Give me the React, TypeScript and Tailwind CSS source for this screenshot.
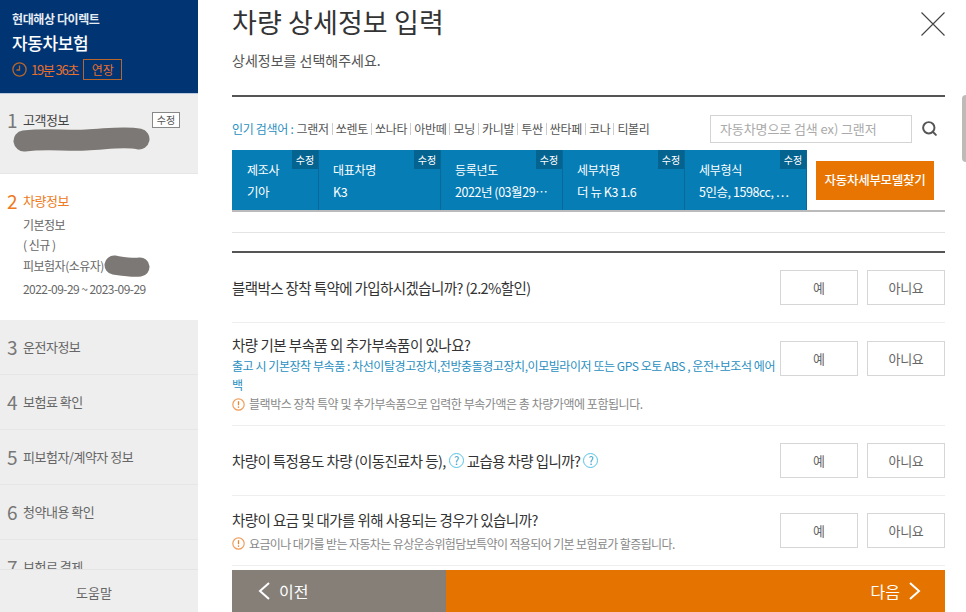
import { Search } from "lucide-react";

const FONT = "font-['Noto_Sans_CJK_KR','Noto_Sans',sans-serif]";

const popular = ["그랜저", "쏘렌토", "쏘나타", "아반떼", "모닝", "카니발", "투싼", "싼타페", "코나", "티볼리"];

const cells = [
    { label: "제조사", value: "기아", width: "w-[87px]", pad: "pl-[15px]" },
    { label: "대표차명", value: "K3", width: "w-[122px]", pad: "pl-[14px]" },
    { label: "등록년도", value: "2022년 (03월29…", width: "w-[122px]", pad: "pl-[14px]" },
    { label: "세부차명", value: "더 뉴 K3 1.6", width: "w-[122px]", pad: "pl-[14px]" },
    { label: "세부형식", value: "5인승, 1598cc, …", width: "w-[122px]", pad: "pl-[14px]" },
];

const steps = [
    { no: 3, name: "운전자정보" },
    { no: 4, name: "보험료 확인" },
    { no: 5, name: "피보험자/계약자 정보" },
    { no: 6, name: "청약내용 확인" },
    { no: 7, name: "보험료 결제" },
];

const Clock = () => (
    <svg width="15" height="15" viewBox="0 0 15 15" fill="none" stroke="#b8662c" strokeWidth="1.3" className="shrink-0">
        <circle cx="7.5" cy="7.5" r="6.6" />
        <path d="M7.5 3.6v4.4h-3" />
    </svg>
);

const Warn = () => (
    <svg width="13" height="13" viewBox="0 0 13 13" fill="none" className="shrink-0">
        <circle cx="6.5" cy="6.5" r="5.7" stroke="#f0a060" strokeWidth="1.2" />
        <path d="M6.5 3.2v4" stroke="#e8842c" strokeWidth="1.3" />
        <path d="M6.5 8.4v1.4" stroke="#e8842c" strokeWidth="1.3" />
    </svg>
);

const Help = () => (
    <span className="inline-flex h-[15px] w-[15px] shrink-0 items-center justify-center rounded-full border-[1.5px] border-[#55c4e8] text-[11px] leading-none text-[#2a9cc8]">
        ?
    </span>
);

const Choice = () => (
    <div className="flex shrink-0 gap-[9px]">
        <button className="h-[35px] w-[78px] border border-[#d6d6d6] bg-white text-[13px] text-[#666]">예</button>
        <button className="h-[35px] w-[78px] border border-[#d6d6d6] bg-white text-[13px] tracking-[-0.3px] text-[#666]">아니요</button>
    </div>
);

const Sidebar = () => (
    <aside className="flex h-[612px] w-[198px] shrink-0 flex-col overflow-hidden bg-[#eeeeee]">
        <div className="h-[94px] shrink-0 border-b border-[#b9c8dc] bg-[#003473] pl-[12px] pt-[10px]">
            <p className="text-[12px] font-bold leading-[18px] tracking-[-0.4px] text-[#e6ecf4]">현대해상 다이렉트</p>
            <p className="mt-[3px] text-[17px] font-medium leading-[24px] tracking-[-0.4px] text-white">자동차보험</p>
            <div className="mt-[4px] flex items-center">
                <Clock />
                <span className="ml-[4px] text-[13px] leading-[20px] tracking-[-1.2px] text-[#e8702e]">19분 36초</span>
                <span className="ml-[5px] flex h-[21px] w-[39px] items-center justify-center border border-[#b8662c] text-[12px] text-[#e8702e]">
                    연장
                </span>
            </div>
        </div>

        <div className="relative h-[80px] shrink-0 border-b border-[#e6e6e6] pl-[7px] pt-[16px]">
            <div className="flex items-center">
                <span className="w-[16px] text-[19px] leading-[20px] text-[#777]">1</span>
                <span className="text-[13px] leading-[20px] tracking-[-0.5px] text-[#444]">고객정보</span>
                <span className="ml-auto mr-[18px] flex h-[16px] w-[28px] items-center justify-center border border-[#888] bg-white text-[10px] leading-none text-[#555]">
                    수정
                </span>
            </div>
            <svg width="140" height="26" viewBox="0 0 140 26" fill="none" className="absolute left-[12px] top-[33px]">
                <path d="M12 14C35 11 52 14 74 13C96 12 112 9 127 12" stroke="#7c7875" strokeWidth="21" strokeLinecap="round" />
            </svg>
        </div>

        <div className="relative h-[146px] shrink-0 bg-white pl-[7px] pt-[17px]">
            <div className="flex items-center">
                <span className="w-[16px] text-[19px] leading-[20px] text-[#ee7a22]">2</span>
                <span className="text-[13px] leading-[20px] tracking-[-0.5px] text-[#ee7a22]">차량정보</span>
            </div>
            <div className="ml-[16px] mt-[3px] text-[12px] leading-[22px] tracking-[-0.5px] text-[#666]">
                <p>기본정보</p>
                <p className="mt-[-2px]">( 신규 )</p>
                <p className="mt-[-1px]">피보험자(소유자)</p>
                <p className="mt-[1px] tracking-[-0.55px]">2022-09-29 ~ 2023-09-29</p>
            </div>
            <svg width="48" height="24" viewBox="0 0 48 24" fill="none" className="absolute left-[103px] top-[81px]">
                <path d="M11 10C18 11 28 13 37 12" stroke="#7c7875" strokeWidth="19" strokeLinecap="round" />
            </svg>
        </div>

        <div className="min-h-0 flex-1 overflow-hidden">
            {steps.map((s) => (
                <div key={s.no} className="flex h-[55px] items-center border-b border-[#e6e6e6] pl-[7px]">
                    <span className="w-[16px] text-[19px] leading-[20px] text-[#777]">{s.no}</span>
                    <span className="text-[13px] tracking-[-0.5px] text-[#666]">{s.name}</span>
                </div>
            ))}
        </div>
        <div className="flex h-[43px] shrink-0 items-center justify-center border-t border-[#e4e4e4] pr-[10px] pt-[3px] text-[13px] text-[#666]">
            도움말
        </div>
    </aside>
);

const App = () => {
    return (
        <div className={`relative flex h-[612px] w-[966px] overflow-hidden bg-white ${FONT}`}>
            <Sidebar />

            <main className="flex h-[612px] w-[747px] shrink-0 flex-col pl-[34px]">
                <div className="flex h-[95px] shrink-0 justify-between">
                    <div>
                        <h1 className="pt-[4px] text-[27px] font-normal leading-[36px] tracking-[0.1px] text-[#333]">차량 상세정보 입력</h1>
                        <p className="mt-[10px] text-[14px] leading-[20px] tracking-[0px] text-[#555]">상세정보를 선택해주세요.</p>
                    </div>
                    <svg width="24" height="24" viewBox="0 0 24 24" fill="none" stroke="#444" strokeWidth="1.1" className="mt-[12px]">
                        <path d="M0.5 0.5 23.5 23.5M23.5 0.5 0.5 23.5" />
                    </svg>
                </div>

                <div className="flex h-[55px] shrink-0 items-center border-t-[2px] border-[#555] pb-[6px] pt-[16px]">
                    <span className="text-[12px] tracking-[-0.3px] text-[#2a8fc0]">인기 검색어 :</span>
                    <div className="ml-[3px] flex items-center text-[12px] tracking-[-0.3px] text-[#555]">
                        {popular.map((p, i) => (
                            <span key={p} className={i > 0 ? "ml-[3px] border-l border-[#ccc] pl-[3px] leading-[12px]" : "leading-[12px]"}>
                                {p}
                            </span>
                        ))}
                    </div>
                    <div className="ml-auto flex h-[28px] w-[202px] items-center border border-[#d4d4d4] pl-[9px] text-[13px] tracking-[-0.1px] text-[#aaa]">
                        자동차명으로 검색 ex) 그랜저
                    </div>
                    <Search size={17} strokeWidth={2.8} className="ml-[9px] mr-[7px] text-[#555]" />
                </div>

                <div className="flex h-[62px] shrink-0 items-start border-b-[2px] border-[#bbb]">
                    <div className="flex h-[60px] bg-[#067db5]">
                        {cells.map((c) => (
                            <div key={c.label} className={`relative h-full border-r border-[#06699a] ${c.width} ${c.pad} pt-[10px]`}>
                                <p className="text-[12px] leading-[20px] tracking-[-0.3px] text-white">{c.label}</p>
                                <p className="mt-[2px] whitespace-nowrap text-[12.5px] leading-[20px] tracking-[-0.45px] text-white">{c.value}</p>
                                <span className="absolute right-0 top-0 flex h-[19px] w-[26px] items-center justify-center bg-[#05638f] text-[10px] leading-none text-white">
                                    수정
                                </span>
                            </div>
                        ))}
                    </div>
                    <button className="ml-[9px] mt-[11px] h-[39px] w-[118px] bg-[#e87502] text-[12.5px] font-medium tracking-[-0.3px] text-white">
                        자동차세부모델찾기
                    </button>
                </div>

                <div className="h-[21px] shrink-0 border-b border-[#e4e4e4]" />
                <div className="h-[20px] shrink-0 border-b-[2px] border-[#555]" />

                <div className="flex h-[70px] shrink-0 items-center justify-between border-b border-[#eee]">
                    <p className="text-[14.5px] tracking-[-0.6px] text-[#333]">블랙박스 장착 특약에 가입하시겠습니까? (2.2%할인)</p>
                    <Choice />
                </div>

                <div className="flex h-[103px] shrink-0 items-start justify-between border-b border-[#eee] pt-[11px]">
                    <div className="w-[545px]">
                        <p className="text-[14.5px] leading-[22px] tracking-[-0.5px] text-[#333]">차량 기본 부속품 외 추가부속품이 있나요?</p>
                        <p className="text-[12px] leading-[19px] tracking-[-0.44px] text-[#2a8fc0]">
                            출고 시 기본장착 부속품 : 차선이탈경고장치,전방충돌경고장치,이모빌라이저 또는 GPS 오토 ABS , 운전+보조석 에어백
                        </p>
                        <div className="mt-[1px] flex items-center gap-[4px]">
                            <Warn />
                            <p className="text-[12px] leading-[18px] tracking-[-0.45px] text-[#888]">
                                블랙박스 장착 특약 및 추가부속품으로 입력한 부속가액은 총 차량가액에 포함됩니다.
                            </p>
                        </div>
                    </div>
                    <div className="pt-[7px]">
                        <Choice />
                    </div>
                </div>

                <div className="flex h-[70px] shrink-0 items-center justify-between border-b border-[#eee]">
                    <div className="flex items-center gap-[3px] text-[14.5px] tracking-[-0.6px] text-[#333]">
                        <span>차량이 특정용도 차량 (이동진료차 등),</span>
                        <Help />
                        <span>교습용 차량 입니까?</span>
                        <Help />
                    </div>
                    <Choice />
                </div>

                <div className="flex h-[70px] shrink-0 items-center justify-between border-b border-[#eee]">
                    <div>
                        <p className="text-[14.5px] leading-[22px] tracking-[-0.58px] text-[#333]">차량이 요금 및 대가를 위해 사용되는 경우가 있습니까?</p>
                        <div className="mt-[4px] flex items-center gap-[4px]">
                            <Warn />
                            <p className="text-[12px] leading-[18px] tracking-[-0.62px] text-[#888]">
                                요금이나 대가를 받는 자동차는 유상운송위험담보특약이 적용되어 기본 보험료가 할증됩니다.
                            </p>
                        </div>
                    </div>
                    <Choice />
                </div>

                <div className="mt-[4px] flex min-h-0 flex-1 text-white">
                    <button className="flex w-[214px] items-center bg-[#857f78] pl-[26px] text-[16px]">
                        <svg width="12" height="18" viewBox="0 0 12 18" fill="none" stroke="white" strokeWidth="2" className="mr-[9px]">
                            <path d="M11 1 2 9l9 8" />
                        </svg>
                        이전
                    </button>
                    <button className="flex flex-1 items-center justify-end bg-[#e57300] pr-[24px] text-[16px]">
                        다음
                        <svg width="12" height="18" viewBox="0 0 12 18" fill="none" stroke="white" strokeWidth="2" className="ml-[9px]">
                            <path d="M1 1 10 9l-9 8" />
                        </svg>
                    </button>
                </div>
            </main>

            <div className="absolute right-0 top-[95px] h-[67px] w-[4px] rounded-l-[4px] bg-[#bdbab7]" />
        </div>
    );
};

export default App;
